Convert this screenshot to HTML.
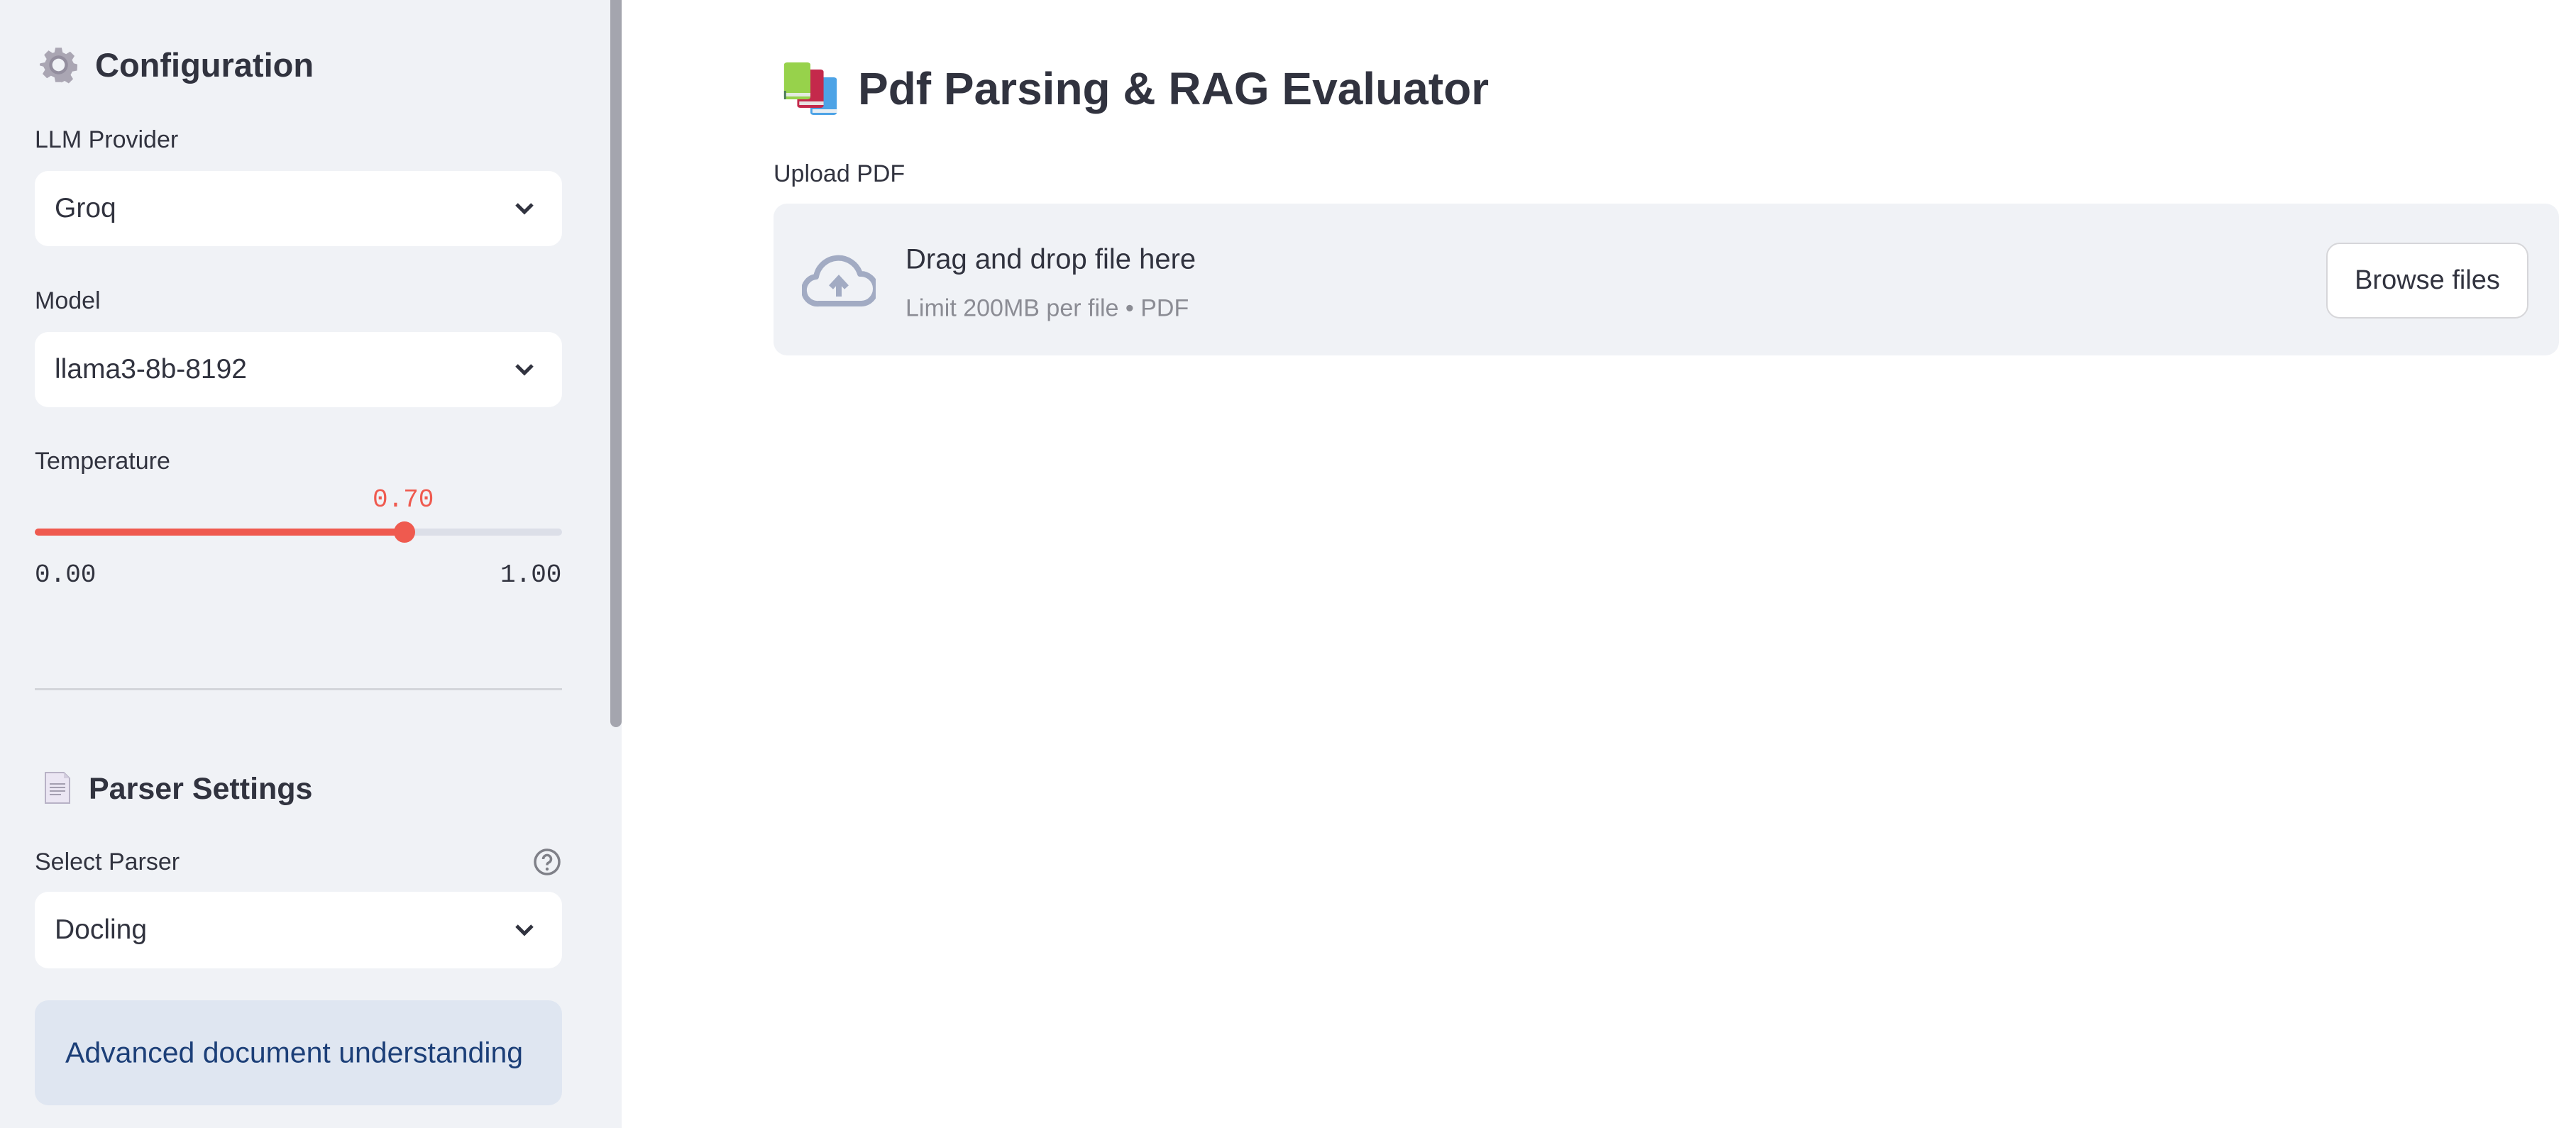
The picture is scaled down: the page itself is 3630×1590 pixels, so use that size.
<!DOCTYPE html>
<html><head><meta charset="utf-8"><style>
*{margin:0;padding:0;box-sizing:border-box}
body{width:3630px;height:1590px;background:#fff;font-family:"Liberation Sans",sans-serif;color:#31333f;position:relative;overflow:hidden}
.a{position:absolute;white-space:nowrap}
#sb{position:absolute;left:0;top:0;width:876px;height:1590px;background:#f0f2f6}
#scroll{position:absolute;left:860px;top:0;width:16px;height:1025px;background:#a4a5ae;border-radius:0 0 8px 8px}
.lbl{font-size:34px;line-height:1;transform:translateY(-50%)}
.sel{position:absolute;left:49px;width:743px;height:106px;background:#fff;border-radius:19px}
.sel span{position:absolute;left:28px;top:50%;transform:translateY(-50%);font-size:39px}
.sel svg{position:absolute;right:38px;top:50%;transform:translateY(-50%)}
.mono{font-family:"Liberation Mono",monospace;font-size:36px}
</style></head><body>
<div id="sb">
<svg class="a" style="left:56px;top:65px" width="53" height="53" viewBox="0 0 24 24"><path fill="#aaa6b3" d="M10 1h4l.6 3 2.2 1.1 2.6-1.6 2.8 2.8-1.6 2.6L21.7 11l2.3.6v1l-.2 3-3 .6-1.1 2.2 1.6 2.6-2.8 2.8-2.6-1.6-2.2 1.1L14 23h-4l-.6-3-2.2-1.1-2.6 1.6-2.8-2.8 1.6-2.6L2.3 13 0 12.4v-1l.3-.4 3-.6 1.1-2.2-1.6-2.6 2.8-2.8 2.6 1.6L9.4 4z"/><circle cx="12" cy="12" r="6" fill="#938e9e"/><circle cx="12" cy="12" r="4" fill="#f0f2f6"/></svg>
<div class="a" style="left:134px;top:68px;font-size:47px;font-weight:bold;line-height:1">Configuration</div>
<div class="a lbl" style="left:49px;top:197px">LLM Provider</div>
<div class="sel" style="top:241px"><span>Groq</span><svg width="30" height="20" viewBox="0 0 30 20"><path d="M4 4l11 11L26 4" stroke="#31333f" stroke-width="5" fill="none"/></svg></div>
<div class="a lbl" style="left:49px;top:424px">Model</div>
<div class="sel" style="top:468px"><span>llama3-8b-8192</span><svg width="30" height="20" viewBox="0 0 30 20"><path d="M4 4l11 11L26 4" stroke="#31333f" stroke-width="5" fill="none"/></svg></div>
<div class="a lbl" style="left:49px;top:650px">Temperature</div>
<div class="a mono" style="left:525px;top:684px;color:#ef5a4f">0.70</div>
<div class="a" style="left:49px;top:745px;width:743px;height:10px;border-radius:5px;background:#dcdfe8"></div>
<div class="a" style="left:49px;top:745px;width:521px;height:10px;border-radius:5px;background:#ef5a4f"></div>
<div class="a" style="left:555px;top:735px;width:30px;height:30px;border-radius:50%;background:#ef5a4f"></div>
<div class="a mono" style="left:49px;top:790px">0.00</div>
<div class="a mono" style="left:705px;top:790px">1.00</div>
<div class="a" style="left:49px;top:970px;width:743px;height:3px;background:#d3d5da"></div>
<svg class="a" style="left:62px;top:1087px" width="38" height="47" viewBox="0 0 38 47"><path d="M2 2h26l8 8v35H2z" fill="#ebe6f3" stroke="#b8b2c6" stroke-width="2"/><path d="M28 2v8h8" fill="#d2ccdd"/><path d="M8 18h22M8 23h22M8 28h22M8 33h16" stroke="#8c8799" stroke-width="1.6"/></svg>
<div class="a" style="left:125px;top:1091px;font-size:43px;font-weight:bold;line-height:1">Parser Settings</div>
<div class="a lbl" style="left:49px;top:1215px">Select Parser</div>
<svg class="a" style="left:751px;top:1195px" width="40" height="40" viewBox="0 0 40 40"><circle cx="20" cy="20" r="17" stroke="#7f8088" stroke-width="3.5" fill="none"/><path d="M14.5 16a5.5 5.5 0 1 1 7.5 5c-1.5.7-2 1.5-2 3.5" stroke="#7f8088" stroke-width="3.5" fill="none"/><circle cx="20" cy="30" r="2.2" fill="#7f8088"/></svg>
<div class="sel" style="top:1257px;height:108px"><span>Docling</span><svg width="30" height="20" viewBox="0 0 30 20"><path d="M4 4l11 11L26 4" stroke="#31333f" stroke-width="5" fill="none"/></svg></div>
<div class="a" style="left:49px;top:1410px;width:743px;height:148px;background:#dfe6f1;border-radius:19px"></div>
<div class="a" style="left:92px;top:1484px;transform:translateY(-50%);font-size:41px;color:#1c3f78">Advanced document understanding</div>
<div id="scroll"></div>
</div>
<svg class="a" style="left:1102px;top:88px" width="80" height="75" viewBox="0 0 56 75" preserveAspectRatio="none"><rect x="28" y="21" width="26" height="53" rx="3" fill="#4da3e6"/><rect x="30" y="66" width="24" height="5" fill="#e8eef3"/><rect x="15" y="10" width="26" height="54" rx="3" fill="#c4294b"/><rect x="17" y="55" width="24" height="5" fill="#e8e3e3"/><rect x="2" y="0" width="26" height="52" rx="3" fill="#97d24b"/><rect x="3" y="43" width="25" height="5" fill="#e4ebe0"/><rect x="2" y="40" width="2" height="12" fill="#4a7a56"/></svg>
<div class="a" style="left:1209px;top:125px;transform:translateY(-50%);font-size:64px;font-weight:bold">Pdf Parsing &amp; RAG Evaluator</div>
<div class="a lbl" style="left:1090px;top:245px">Upload PDF</div>
<div class="a" style="left:1090px;top:287px;width:2516px;height:214px;background:#f0f2f6;border-radius:19px"></div>
<svg class="a" style="left:1130px;top:356px" width="104" height="78" viewBox="0 0 104 78"><path d="M30 72H24A19 19 0 0 1 20 34 32 32 0 0 1 82 30 21 21 0 0 1 84 72H30z" fill="none" stroke="#a2abc3" stroke-width="8" stroke-linejoin="round"/><path d="M52 62V40M41 49l11-12 11 12" stroke="#a2abc3" stroke-width="8" fill="none"/></svg>
<div class="a" style="left:1276px;top:366px;transform:translateY(-50%);font-size:40px">Drag and drop file here</div>
<div class="a" style="left:1276px;top:435px;transform:translateY(-50%);font-size:34px;color:#8b8c94">Limit 200MB per file • PDF</div>
<div class="a" style="left:3278px;top:342px;width:285px;height:107px;background:#fff;border:2px solid #d6d6d9;border-radius:19px;display:flex;align-items:center;justify-content:center;font-size:38px">Browse files</div>
</body></html>
